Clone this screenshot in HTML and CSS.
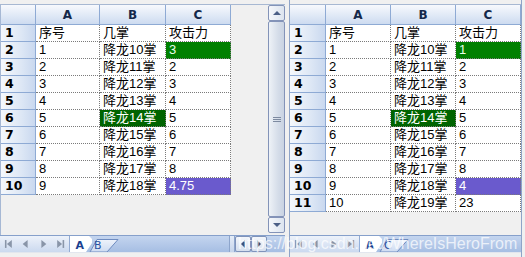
FILE: index.html
```html
<!DOCTYPE html>
<html>
<head>
<meta charset="utf-8">
<link rel="stylesheet" href="styles.css">
</head>
<body>
<div class="app">
  <div class="pane pane-left">
    <div class="top"></div>
    <div class="main">
      <div class="sheet sheet-left">
        <div class="corner"></div><div class="h">A</div><div class="h">B</div><div class="h">C</div>
        <div class="rh">1</div><div class="c">序号</div><div class="c">几掌</div><div class="c">攻击力</div>
        <div class="rh">2</div><div class="c">1</div><div class="c">降龙10掌</div><div class="c g">3</div>
        <div class="rh">3</div><div class="c">2</div><div class="c">降龙11掌</div><div class="c">2</div>
        <div class="rh">4</div><div class="c">3</div><div class="c">降龙12掌</div><div class="c">3</div>
        <div class="rh">5</div><div class="c">4</div><div class="c">降龙13掌</div><div class="c">4</div>
        <div class="rh">6</div><div class="c">5</div><div class="c dg">降龙14掌</div><div class="c">5</div>
        <div class="rh">7</div><div class="c">6</div><div class="c">降龙15掌</div><div class="c">6</div>
        <div class="rh">8</div><div class="c">7</div><div class="c">降龙16掌</div><div class="c">7</div>
        <div class="rh">9</div><div class="c">8</div><div class="c">降龙17掌</div><div class="c">8</div>
        <div class="rh">10</div><div class="c">9</div><div class="c">降龙18掌</div><div class="c p">4.75</div>
      </div>
      <div class="vscroll">
        <div class="sbtn"><span class="tri-up"></span></div>
        <div class="thumb"><span class="grip"></span></div>
        <div class="sbtn"><span class="tri-down"></span></div>
      </div>
    </div>
    <div class="tabbar">
      <svg class="nav" width="70" height="16" viewBox="0 0 70 16">
        <rect x="5" y="4" width="1.6" height="8" fill="#8995a8"/>
        <polygon points="12,4 7,8 12,12" fill="#8995a8"/>
        <polygon points="28,4 23,8 28,12" fill="#8995a8"/>
        <polygon points="42,4 47,8 42,12" fill="#8995a8"/>
        <polygon points="58,4 63,8 58,12" fill="#8995a8"/>
        <rect x="63.5" y="4" width="1.6" height="8" fill="#8995a8"/>
      </svg>
      <svg class="tabs" width="50" height="16" viewBox="0 0 50 16">
        <defs>
          <linearGradient id="tb" x1="0" y1="0" x2="0" y2="1">
            <stop offset="0" stop-color="#eef3fb"/>
            <stop offset="1" stop-color="#cddbf1"/>
          </linearGradient>
        </defs>
        <polygon points="20,16 27,3.5 48,3.5 37,16" fill="url(#tb)" stroke="#6f8cc0" stroke-width="1"/>
        <polygon points="0,0 19,0 22,3 22,7 16,16 0,16" fill="#ffffff"/>
        <text x="5.5" y="13" class="tabtxt-a">A</text>
        <text x="24" y="13" class="tabtxt">B</text>
      </svg>
      <div class="fill"></div>
      <div class="split"></div>
      <div class="hbtn"><span class="tri-left"></span></div>
      <div class="hbtn"><span class="tri-right"></span></div>
      <div class="fill-end"></div>
    </div>
    <div class="bottom"></div>
  </div>
  <div class="divider"></div>
  <div class="pane pane-right">
    <div class="top"></div>
    <div class="main">
      <div class="sheet sheet-right">
        <div class="corner"></div><div class="h">A</div><div class="h">B</div><div class="h">C</div>
        <div class="rh">1</div><div class="c">序号</div><div class="c">几掌</div><div class="c">攻击力</div>
        <div class="rh">2</div><div class="c">1</div><div class="c">降龙10掌</div><div class="c g">1</div>
        <div class="rh">3</div><div class="c">2</div><div class="c">降龙11掌</div><div class="c">2</div>
        <div class="rh">4</div><div class="c">3</div><div class="c">降龙12掌</div><div class="c">3</div>
        <div class="rh">5</div><div class="c">4</div><div class="c">降龙13掌</div><div class="c">4</div>
        <div class="rh">6</div><div class="c">5</div><div class="c dg">降龙14掌</div><div class="c">5</div>
        <div class="rh">7</div><div class="c">6</div><div class="c">降龙15掌</div><div class="c">6</div>
        <div class="rh">8</div><div class="c">7</div><div class="c">降龙16掌</div><div class="c">7</div>
        <div class="rh">9</div><div class="c">8</div><div class="c">降龙17掌</div><div class="c">8</div>
        <div class="rh">10</div><div class="c">9</div><div class="c">降龙18掌</div><div class="c p">4</div>
        <div class="rh">11</div><div class="c">10</div><div class="c">降龙19掌</div><div class="c">23</div>
      </div>
    </div>
    <div class="tabbar">
      <svg class="nav" width="70" height="16" viewBox="0 0 70 16">
        <rect x="5" y="4" width="1.6" height="8" fill="#8995a8"/>
        <polygon points="12,4 7,8 12,12" fill="#8995a8"/>
        <polygon points="28,4 23,8 28,12" fill="#8995a8"/>
        <polygon points="42,4 47,8 42,12" fill="#8995a8"/>
        <polygon points="58,4 63,8 58,12" fill="#8995a8"/>
        <rect x="63.5" y="4" width="1.6" height="8" fill="#8995a8"/>
      </svg>
      <svg class="tabs" width="50" height="16" viewBox="0 0 50 16">
        <defs>
          <linearGradient id="tb2" x1="0" y1="0" x2="0" y2="1">
            <stop offset="0" stop-color="#eef3fb"/>
            <stop offset="1" stop-color="#cddbf1"/>
          </linearGradient>
        </defs>
        <polygon points="20,16 27,3.5 48,3.5 37,16" fill="url(#tb2)" stroke="#6f8cc0" stroke-width="1"/>
        <polygon points="0,0 19,0 22,3 22,7 16,16 0,16" fill="#ffffff"/>
        <text x="5.5" y="13" class="tabtxt-a">A</text>
        <text x="24" y="13" class="tabtxt">C</text>
      </svg>
      <div class="fill"></div>
    </div>
    <div class="bottom"></div>
  </div>
  <div class="watermark">https://blog.csdn.net/WhereIsHeroFrom</div>
</div>
</body>
</html>
```
FILE: styles.css
```css
* { box-sizing: border-box; }
body {
  margin: 0;
  background: #f0f0f0;
  font-family: "Liberation Sans", "Noto Sans CJK SC", sans-serif;
}
.app {
  position: relative;
  display: flex;
  width: 525px;
  height: 257px;
  overflow: hidden;
  background: #f0f0f0;
}
.pane {
  display: flex;
  flex-direction: column;
  height: 257px;
}
.pane-left { width: 285px; }
.divider { width: 4px; }
.pane-right {
  width: 233px;
  border-left: 1px solid #8ea4c8;
  border-right: 1px solid #8ea4c8;
}
.top {
  height: 5px;
  background: #f0f0f0;
  border-bottom: 1px solid #a7b8d2;
}
.main {
  height: 230px;
  display: flex;
}
.sheet {
  flex: 1;
  display: grid;
  grid-template-rows: 20px;
  grid-auto-rows: 17px;
  align-content: start;
  background: #f0f0f0;
}
.sheet-left {
  grid-template-columns: 35px 64px 66px 65px;
  border-left: 1px solid #a6b8d4;
}
.sheet-right {
  grid-template-columns: 36px 65px 65px 65px;
}
.corner, .h {
  background: linear-gradient(#f7f9fd, #e0e9f6 55%, #cddbf0);
  border-right: 1px solid #8eaad4;
  border-bottom: 1px solid #8eaad4;
}
.h {
  font-family: "DejaVu Sans", sans-serif;
  font-weight: bold;
  font-size: 12px;
  color: #14284a;
  display: flex;
  align-items: center;
  justify-content: center;
  padding-top: 1px;
}
.rh {
  background: linear-gradient(to right, #f5f8fc, #dde7f5 60%, #c9d8ef);
  border-right: 1px solid #8eaad4;
  border-bottom: 1px solid #8eaad4;
  font-family: "DejaVu Sans", sans-serif;
  font-weight: bold;
  font-size: 12.5px;
  color: #000;
  line-height: 16px;
  padding-left: 4px;
}
.c {
  background: #fff;
  border-right: 1px dotted #7a7a7a;
  border-bottom: 1px dotted #7a7a7a;
  font-size: 13px;
  line-height: 16px;
  padding-left: 3px;
  color: #000;
  white-space: nowrap;
  overflow: hidden;
}
.c.g { background: #008000; color: #eaffea; }
.c.dg { background: #006400; color: #ffffff; }
.c.p { background: #6a5acd; color: #ffffff; }

.vscroll {
  width: 17px;
  height: 228px;
  display: flex;
  flex-direction: column;
}
.sbtn {
  height: 16px;
  border: 1px solid #8393b8;
  border-radius: 2px;
  background: linear-gradient(to right, #f5f7fb, #dce4ef);
  display: flex;
  align-items: center;
  justify-content: center;
}
.thumb {
  flex: 1;
  border: 1px solid #8393b8;
  border-radius: 2px;
  background: linear-gradient(to right, #eef2f7, #d5dde9 60%, #c9d3e2);
  display: flex;
  align-items: center;
  justify-content: center;
}
.grip {
  width: 8px;
  height: 5px;
  border-top: 1px solid #7d8aa0;
  border-bottom: 1px solid #7d8aa0;
  background: linear-gradient(transparent 1px, #7d8aa0 1px, #7d8aa0 2px, transparent 2px);
}
.tri-up {
  width: 0; height: 0;
  border-left: 4px solid transparent;
  border-right: 4px solid transparent;
  border-bottom: 4px solid #4b5f86;
}
.tri-down {
  width: 0; height: 0;
  border-left: 4px solid transparent;
  border-right: 4px solid transparent;
  border-top: 4px solid #4b5f86;
}
.tri-left {
  width: 0; height: 0;
  border-top: 4px solid transparent;
  border-bottom: 4px solid transparent;
  border-right: 4px solid #3e5279;
}
.tri-right {
  width: 0; height: 0;
  border-top: 4px solid transparent;
  border-bottom: 4px solid transparent;
  border-left: 4px solid #3e5279;
}
.tabbar {
  height: 17px;
  display: flex;
  border-top: 1px solid #86a0cb;
  background: linear-gradient(#c4d5ef, #a6bee3);
}
.nav {
  display: block;
  flex: none;
  background: linear-gradient(#edf2fa, #cbd9ef);
  border-right: 1px solid #93abd2;
}
.tabs { display: block; flex: none; }
.tabtxt-a {
  font-family: "DejaVu Sans", sans-serif;
  font-weight: bold;
  font-size: 11px;
  fill: #1b3f8f;
}
.tabtxt {
  font-family: "DejaVu Sans", sans-serif;
  font-size: 11px;
  fill: #2a51a0;
}
.fill { flex: 1; }
.split {
  width: 6px;
  background: linear-gradient(#e4ecf7, #c6d5ec);
  border-left: 1px solid #8da5cc;
  border-right: 1px solid #8da5cc;
}
.hbtn {
  width: 16px;
  border: 1px solid #7f93ba;
  border-radius: 2px;
  background: linear-gradient(#f3f6fb, #d5dfee);
  display: flex;
  align-items: center;
  justify-content: center;
}
.fill-end { width: 18px; }
.bottom {
  flex: 1;
  background: #f0f0f0;
  border-top: 1px solid #e2e6ee;
}
.watermark {
  position: absolute;
  left: 238px;
  top: 235px;
  font-family: "Liberation Sans", sans-serif;
  font-size: 16px;
  line-height: 18px;
  color: rgba(255, 255, 255, 0.72);
  white-space: nowrap;
  pointer-events: none;
}
```
